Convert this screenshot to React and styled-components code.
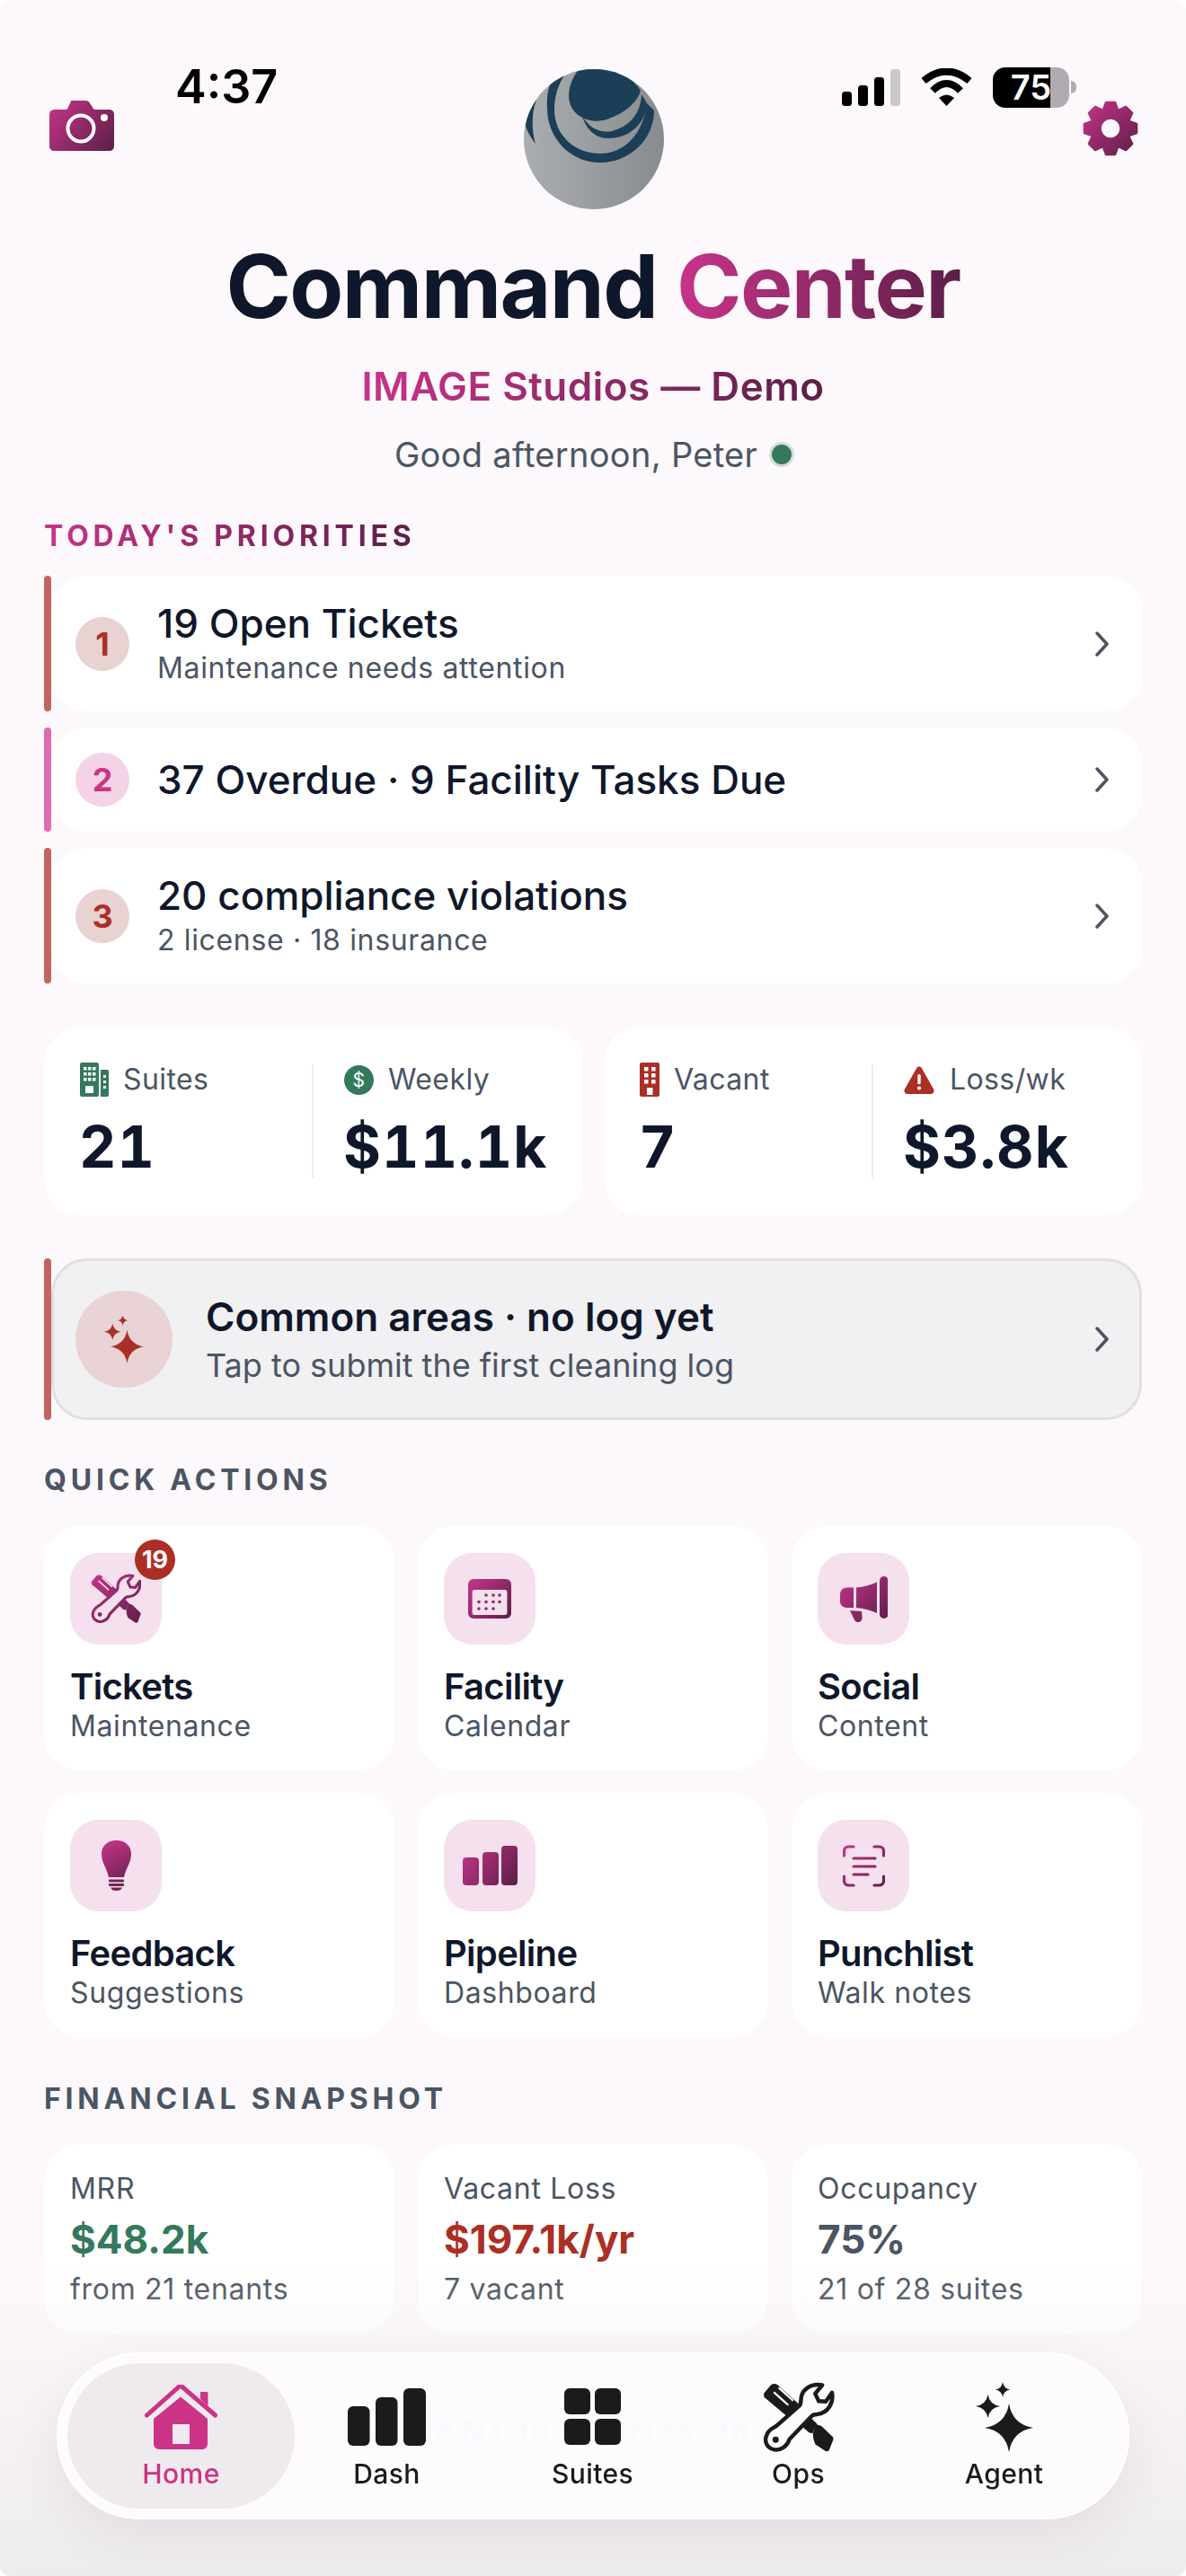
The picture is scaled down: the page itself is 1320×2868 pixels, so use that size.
import React from 'react';
import styled, { createGlobalStyle } from 'styled-components';

const PINK = '#c8348a';
const PLUM = '#5b1f47';
const INK = '#0f172a';
const GRAY = '#4b5563';
const GREEN = '#34795c';
const RED = '#ab2f25';
const NAV_INK = '#1c1a1c';
const TILE = '#f5e0ed';

const GlobalStyle = createGlobalStyle`
  * { box-sizing: border-box; }
  html, body { margin: 0; padding: 0; background: #fff; }
  body { font-family: Inter, "Noto Sans", sans-serif; color: ${INK}; }
`;

// #region Styles

const Page = styled.div`
  position: relative;
  width: 1320px;
  height: 2868px;
  overflow: hidden;
  background: #fcf8fb;
  border-radius: 12px;
`;

const StatusBar = styled.div`
  position: absolute;
  top: 68px;
  left: 195px;
  right: 122px;
  height: 58px;
  display: flex;
  align-items: center;
  justify-content: space-between;
  color: #000;
`;

const Time = styled.span`
  font-size: 52px;
  font-weight: 600;
  line-height: 58px;
`;

const StatusIcons = styled.div`
  display: flex;
  align-items: center;
  gap: 23px;
`;

const Battery = styled.div`
  display: flex;
  align-items: center;
  gap: 2px;
`;

const BatteryBody = styled.div`
  width: 85px;
  height: 45px;
  border-radius: 14px;
  background: linear-gradient(90deg, #000 75%, #b0abb0 75%);
  color: #fff;
  font-size: 38px;
  font-weight: 600;
  line-height: 45px;
  text-align: center;
`;

const BatteryNub = styled.div`
  width: 6px;
  height: 14px;
  border-radius: 0 7px 7px 0;
  background: #b0abb0;
`;

const TopRow = styled.header`
  display: flex;
  align-items: flex-start;
  padding: 77px 53px 0 55px;
`;

const TopIcon = styled.div`
  flex: 1;
  display: flex;
  justify-content: ${(p) => (p.$end ? 'flex-end' : 'flex-start')};
  margin-top: 35px;
`;

const Hero = styled.div`
  text-align: center;
  margin-top: 28px;
`;

const Title = styled.h1`
  margin: 0;
  font-size: 98px;
  font-weight: 700;
  line-height: 116px;
  letter-spacing: -1.6px;
  color: ${INK};
`;

const GradientText = styled.span`
  display: inline-block;
  background: linear-gradient(90deg, ${PINK}, ${PLUM});
  -webkit-background-clip: text;
  background-clip: text;
  color: transparent;
`;

const Subtitle = styled.div`
  margin-top: 27px;
  font-size: 44px;
  font-weight: 600;
  line-height: 52px;
  letter-spacing: 0.5px;
`;

const Greeting = styled.div`
  margin-top: 26px;
  display: flex;
  justify-content: center;
  align-items: center;
  gap: 16px;
  font-size: 38px;
  line-height: 48px;
  letter-spacing: 0.3px;
  color: ${GRAY};
`;

const OnlineDot = styled.span`
  width: 22px;
  height: 22px;
  border-radius: 50%;
  background: ${GREEN};
  box-shadow: 0 0 0 3px rgba(52, 121, 92, 0.2);
`;

const Main = styled.main`
  padding: 0 49px;
`;

const SectionLabel = styled.h2`
  margin: ${(p) => p.$top}px 0 ${(p) => p.$bottom}px;
  font-size: 32px;
  font-weight: 700;
  line-height: 40px;
  letter-spacing: 4.8px;
  color: ${GRAY};
`;

const PriorityList = styled.div`
  display: flex;
  flex-direction: column;
  gap: 18px;
`;

const AccentRow = styled.div`
  position: relative;
  display: flex;
  align-items: center;
  margin-left: 8px;
  border-radius: 40px;
  &::before {
    content: '';
    position: absolute;
    top: ${(p) => -(p.$inset || 0)}px;
    bottom: ${(p) => -(p.$inset || 0)}px;
    left: ${(p) => -8 - (p.$inset || 0)}px;
    width: 8px;
    border-radius: 4px;
    background: ${(p) => p.$accent};
  }
`;

const PriorityRow = styled(AccentRow)`
  min-height: 114px;
  padding: 28px 36px 28px 27px;
  background: #fff;
`;

const RankBadge = styled.div`
  flex: none;
  width: 60px;
  height: 60px;
  margin-right: 31px;
  border-radius: 50%;
  display: flex;
  align-items: center;
  justify-content: center;
  background: ${(p) => p.$bg};
  color: ${(p) => p.$color};
  font-size: 36px;
  font-weight: 700;
`;

const RowText = styled.div`
  flex: 1;
`;

const RowTitle = styled.div`
  font-size: 44px;
  font-weight: 500;
  line-height: 50px;
  color: ${INK};
`;

const RowSub = styled.div`
  margin-top: 5px;
  font-size: 32px;
  line-height: 40px;
  letter-spacing: 0.65px;
  color: ${GRAY};
`;

const StatsRow = styled.div`
  display: grid;
  grid-template-columns: 1fr 1fr;
  gap: 24px;
  margin-top: 48px;
`;

const StatCard = styled.div`
  display: flex;
  height: 210px;
  padding: 42px 0 41px 40px;
  background: #fff;
  border-radius: 40px;
`;

const StatCol = styled.div`
  height: 127px;
  &:first-child {
    width: 260px;
    flex: none;
    border-right: 2px solid #eeeeef;
  }
  &:last-child {
    padding-left: 34px;
  }
`;

const StatLabel = styled.div`
  display: flex;
  align-items: center;
  gap: ${(p) => p.$gap || 16}px;
  height: 34px;
  font-size: 32px;
  line-height: 34px;
  letter-spacing: 0.4px;
  color: ${GRAY};
`;

const StatValue = styled.div`
  margin-top: 23px;
  margin-left: -1px;
  font-size: 64px;
  font-weight: 700;
  line-height: 70px;
  letter-spacing: 1.2px;
  font-variant-numeric: tabular-nums;
  color: ${INK};
`;

const LogRow = styled(AccentRow)`
  height: 180px;
  margin-top: 48px;
  padding: 0 33px 0 24px;
  background: #f1f0f2;
  border: 3px solid #e1dfe2;
`;

const LogCircle = styled.div`
  flex: none;
  width: 108px;
  height: 108px;
  margin-right: 37px;
  border-radius: 50%;
  display: flex;
  align-items: center;
  justify-content: center;
  background: #e9d3d5;
`;

const LogTitle = styled.div`
  font-size: 44px;
  font-weight: 600;
  line-height: 52px;
  color: ${INK};
`;

const LogSub = styled.div`
  margin-top: 6px;
  font-size: 36px;
  line-height: 44px;
  color: ${GRAY};
`;

const ActionGrid = styled.div`
  display: grid;
  grid-template-columns: repeat(3, 390px);
  gap: 25px 26px;
`;

const ActionCard = styled.div`
  height: 272px;
  padding: 30px 29px;
  background: #fff;
  border-radius: 40px;
`;

const Tile = styled.div`
  position: relative;
  width: 102px;
  height: 102px;
  border-radius: 32px;
  display: flex;
  align-items: center;
  justify-content: center;
  background: ${TILE};
`;

const CountBadge = styled.span`
  position: absolute;
  top: -15px;
  right: -15px;
  width: 45px;
  height: 45px;
  border-radius: 50%;
  background: ${RED};
  color: #fff;
  font-size: 27px;
  font-weight: 700;
  line-height: 45px;
  text-align: center;
`;

const ActionTitle = styled.div`
  margin-top: 23px;
  font-size: 40px;
  font-weight: 600;
  line-height: 48px;
  letter-spacing: -0.7px;
  color: ${INK};
`;

const ActionSub = styled.div`
  font-size: 32px;
  line-height: 40px;
  letter-spacing: 0.6px;
  color: ${GRAY};
`;

const FinanceCard = styled.div`
  height: 212px;
  padding: 30px 29px;
  background: #fff;
  border-radius: 40px;
`;

const FinanceLabel = styled.div`
  font-size: 32px;
  line-height: 40px;
  letter-spacing: 0.7px;
  color: ${GRAY};
`;

const FinanceValue = styled.div`
  margin: 10px 0;
  font-size: 44px;
  font-weight: 700;
  line-height: 52px;
  color: ${(p) => p.$color};
`;

const BottomFade = styled.div`
  position: absolute;
  left: 0;
  right: 0;
  bottom: 0;
  height: 350px;
  pointer-events: none;
  background: linear-gradient(180deg, rgba(238, 235, 238, 0) 0%, rgba(238, 235, 238, 0.95) 100%);
`;

const GhostFooter = styled.div`
  margin-top: 85px;
  text-align: center;
  font-size: 34px;
  font-weight: 700;
  line-height: 44px;
  letter-spacing: 3px;
  color: ${INK};
`;

const BottomNav = styled.nav`
  position: absolute;
  left: 63px;
  right: 63px;
  bottom: 63px;
  height: 186px;
  padding: 10px;
  display: flex;
  border: 2px solid rgba(255, 255, 255, 0.9);
  border-radius: 93px;
  background: rgba(253, 251, 254, 0.975);
  backdrop-filter: blur(1.5px);
  box-shadow: 0 20px 60px rgba(40, 20, 40, 0.07);
`;

const NavItem = styled.div`
  flex: none;
  width: ${(p) => (p.$active ? 253 : 229)}px;
  height: 162px;
  margin-right: ${(p) => (p.$active ? -12 : 0)}px;
  padding-top: 19px;
  border-radius: 81px;
  display: flex;
  flex-direction: column;
  align-items: center;
  gap: 6px;
  background: ${(p) => (p.$active ? '#efeaed' : 'transparent')};
  color: ${(p) => (p.$active ? '#cc3286' : NAV_INK)};
`;

const NavIcon = styled.div`
  height: 82px;
  display: flex;
  align-items: center;
`;

const NavLabel = styled.span`
  font-size: 30px;
  font-weight: 500;
  line-height: 32px;
  letter-spacing: 0.4px;
`;

// #endregion

// #region Icons

const Brand = ({ id, w, h }) => (
  <defs>
    <linearGradient id={id} gradientUnits="userSpaceOnUse" x1="0" y1="0" x2={w} y2={h}>
      <stop offset="0" stopColor={PINK} />
      <stop offset="1" stopColor={PLUM} />
    </linearGradient>
  </defs>
);

const CameraIcon = () => (
  <svg width="72" height="56" viewBox="0 0 72 56">
    <Brand id="cam" w={72} h={56} />
    <path
      fill="url(#cam)"
      fillRule="evenodd"
      d="M24 0h16c3 0 4 1 5 3l4 6 1 1h16c4 0 6 2 6 6v34c0 4-2 6-6 6H6c-4 0-6-2-6-6V16c0-4 2-6 6-6h13l1-1 3-6c1-2 1-3 1-3z"
    />
    <circle cx="35" cy="31" r="14.5" fill="none" stroke="#fff" strokeWidth="4" />
    <circle cx="61" cy="19" r="4" fill="#fff" />
  </svg>
);

function gearPath(c, tip, root, hole) {
  let d = '';
  for (let i = 0; i < 8; i++) {
    const a = (i * Math.PI) / 4 - Math.PI / 2;
    const pts = [
      [root, a - 0.36],
      [tip, a - 0.17],
      [tip, a + 0.17],
      [root, a + 0.36],
    ];
    pts.forEach(([r, t], j) => {
      const x = (c + r * Math.cos(t)).toFixed(2);
      const y = (c + r * Math.sin(t)).toFixed(2);
      d += `${i === 0 && j === 0 ? 'M' : 'L'}${x} ${y} `;
    });
  }
  d += `Z M${c - hole} ${c} a${hole} ${hole} 0 1 0 ${hole * 2} 0 a${hole} ${hole} 0 1 0 ${-hole * 2} 0 Z`;
  return d;
}

const GearIcon = () => (
  <svg width="62" height="62" viewBox="0 0 62 62">
    <Brand id="gear" w={62} h={62} />
    <path
      d={gearPath(31, 29.5, 22.5, 11.5)}
      fill="url(#gear)"
      fillRule="evenodd"
      stroke="url(#gear)"
      strokeWidth="2.5"
      strokeLinejoin="round"
    />
  </svg>
);

const SignalIcon = () => (
  <svg width="65" height="41" viewBox="0 0 65 41">
    <rect x="0" y="25" width="11" height="16" rx="3.5" fill="#000" />
    <rect x="18" y="18" width="11" height="23" rx="3.5" fill="#000" />
    <rect x="36" y="9" width="11" height="32" rx="3.5" fill="#000" />
    <rect x="54" y="0" width="11" height="41" rx="3.5" fill="#cbc8cb" />
  </svg>
);

const WifiIcon = () => (
  <svg width="57" height="42" viewBox="0 0 57 42">
    <path d="M3 14Q28.5 -7 54 14" fill="none" stroke="#000" strokeWidth="8" />
    <path d="M13 25Q28.5 9 44 25" fill="none" stroke="#000" strokeWidth="8" />
    <path d="M20 33Q28.5 26 37 33L28.5 42Z" fill="#000" />
  </svg>
);

const Chevron = () => (
  <svg width="17" height="28" viewBox="0 0 17 28" style={{ flex: 'none' }}>
    <path d="M3 2l11 12L3 26" fill="none" stroke={GRAY} strokeWidth="3.5" strokeLinecap="round" strokeLinejoin="round" />
  </svg>
);

const SuitesBuilding = () => (
  <svg width="32" height="38" viewBox="0 0 32 38" style={{ flex: 'none' }}>
    <rect x="0" y="0" width="21" height="38" rx="2" fill={GREEN} />
    <path d="M23 8h7a2 2 0 0 1 2 2v26a2 2 0 0 1-2 2h-7z" fill={GREEN} />
    {[4, 9, 14].flatMap((x) =>
      [5, 11, 17].map((y) => <rect key={`${x}-${y}`} x={x} y={y} width="3.5" height="3.5" fill="#fff" />)
    )}
    <rect x="6" y="26" width="9" height="8" fill="#fff" />
    {[14, 20, 26].map((y) => (
      <rect key={y} x="26" y={y} width="3" height="3" fill="#fff" />
    ))}
  </svg>
);

const VacantBuilding = () => (
  <svg width="22" height="38" viewBox="0 0 22 38" style={{ flex: 'none' }}>
    <rect x="0" y="0" width="22" height="38" rx="2" fill={RED} />
    {[5, 13].flatMap((x) =>
      [5, 12, 19].map((y) => <rect key={`${x}-${y}`} x={x} y={y} width="4.5" height="4.5" fill="#fff" />)
    )}
    <rect x="8" y="28" width="6.5" height="8" fill="#fff" />
  </svg>
);

const DollarIcon = () => (
  <svg width="33" height="33" viewBox="0 0 33 33" style={{ flex: 'none' }}>
    <circle cx="16.5" cy="16.5" r="16.5" fill={GREEN} />
    <text x="16.5" y="24" textAnchor="middle" fontSize="21" fontFamily="Inter, sans-serif" fill="#fff">$</text>
  </svg>
);

const AlertIcon = () => (
  <svg width="34" height="31" viewBox="0 0 34 31" style={{ flex: 'none' }}>
    <path d="M14 2.5c1.4-2.6 4.6-2.6 6 0l13 23c1.4 2.6-.2 5.500-3 5.500H4c-2.800 0-4.400-2.900-3-5.500z" fill={RED} />
    <rect x="15.300" y="9" width="3.400" height="11" rx="1.500" fill="#fff" />
    <circle cx="17" cy="24.500" r="2.100" fill="#fff" />
  </svg>
);

const star = (cx, cy, rx, ry) => {
  const kx = rx * 0.14;
  const ky = ry * 0.14;
  return `M${cx} ${cy - ry}Q${cx + kx} ${cy - ky} ${cx + rx} ${cy}Q${cx + kx} ${cy + ky} ${cx} ${cy + ry}Q${cx - kx} ${cy + ky} ${cx - rx} ${cy}Q${cx - kx} ${cy - ky} ${cx} ${cy - ry}Z`;
};

const SparkleIcon = ({ width, height, color }) => (
  <svg width={width} height={height} viewBox="0 0 64 78" fill={color}>
    <path d={star(37, 51, 27, 27)} />
    <path d={star(13.500, 27, 13.500, 13)} />
    <path d={star(30, 8.500, 8, 8.500)} />
  </svg>
);

const ToolsIcon = ({ width, height, fill, bg, id }) => (
  <svg width={width} height={height} viewBox="0 0 80 80">
    <Brand id={id} w={80} h={80} />
    <g fill={fill}>
      <path d="M1.500 12.500L9 3.500Q13 .5 17 3.500L43 27 30 41 2 17.500Q.5 15 1.500 12.500Z" />
      <path d="M31 38.500L41 27.500 61 47 56 58 52 57Z" />
      <path d="M60 47.500l6 2 13 12.500q1 2 .2 3.500l-4.500 11.500q-2 2-4 1L59 70l-2-6-.5-6z" />
    </g>
    <path d="M13 12l15 13.500M18.500 7l15 13.500" fill="none" stroke={bg} strokeWidth="2.200" strokeLinecap="round" />
    <path
      d="M67 3.500L59 13l4 8.500 8 .5 7-10C80 23 74 35 61 36.500c-3 0-5 .5-6.500 2.500L30 64.500C28 72 20 78 12 76 4 74 1 66 5 58.500 7 53.500 12 52 16 49L41 27c2-2 2-4 2-7C43 9 54 1 67 3.500Z"
      fill={bg}
      stroke={fill}
      strokeWidth="4.500"
      strokeLinejoin="round"
    />
    <circle cx="14.500" cy="65" r="3.500" fill={fill} />
  </svg>
);

const CalendarIcon = () => (
  <svg width="48" height="44" viewBox="0 0 48 44">
    <Brand id="cal" w={48} h={44} />
    <rect width="48" height="44" rx="6" fill="url(#cal)" />
    <rect x="4.600" y="12" width="38.800" height="28" rx="2.500" fill={TILE} />
    {[
      [20, 18], [28, 18], [35, 18],
      [12, 25.500], [20, 25.500], [28, 25.500], [35, 25.500],
      [12, 33], [20, 33], [28, 33],
    ].map(([cx, cy]) => (
      <circle key={`${cx}-${cy}`} cx={cx} cy={cy} r="1.800" fill="#8c2a68" />
    ))}
  </svg>
);

const MegaphoneIcon = () => (
  <svg width="53" height="51" viewBox="0 0 53 51">
    <Brand id="mega" w={53} h={51} />
    <g fill="url(#mega)">
      <path d="M15 12.500V35H8c-5 0-8-3-8-7v-8c0-4 3-7.500 8-7.500z" />
      <path d="M18 12.500c8-.5 16-3 23-6V41c-7-3-15-5.500-23-6z" />
      <rect x="44" y="0" width="9.500" height="47" rx="4.700" />
      <path d="M11 38l13 1 .5 7c0 3-2 5-4.500 5-2 0-3.500-1.200-4.300-3z" />
    </g>
  </svg>
);

const BulbIcon = () => (
  <svg width="33" height="56" viewBox="0 0 33 56">
    <Brand id="bulb" w={33} h={56} />
    <g fill="url(#bulb)">
      <path d="M16.500 0C26 0 33 6 33 15c0 10-6 16-8 26H8C6 31 0 25 0 15 0 6 7 0 16.500 0Z" />
      <rect x="8" y="43.500" width="17" height="3" rx="1" />
      <rect x="8" y="48" width="17" height="3" rx="1" />
      <path d="M10 52.500h13c-1 2.500-3 3.500-6.500 3.500s-5.500-1-6.500-3.500Z" />
    </g>
  </svg>
);

const PipelineIcon = () => (
  <svg width="61" height="44" viewBox="0 0 61 44">
    <Brand id="pipe" w={61} h={44} />
    <g fill="url(#pipe)">
      <rect x="0" y="13" width="18" height="31" rx="4" />
      <rect x="22" y="7" width="18" height="37" rx="4" />
      <rect x="43" y="0" width="18" height="44" rx="4" />
    </g>
  </svg>
);

const ScanIcon = () => (
  <svg width="47" height="47" viewBox="0 0 47 47">
    <Brand id="scan" w={47} h={47} />
    <path
      d="M1.500 12V7a5 5 0 0 1 5-5H12M35 2h5.500a5 5 0 0 1 5 5v5M45.500 35v5a5 5 0 0 1-5 5H35M12 45H6.500a5 5 0 0 1-5-5v-5M12 15h24M12 24h24M12 33h16"
      fill="none"
      stroke="url(#scan)"
      strokeWidth="3.200"
      strokeLinecap="round"
    />
  </svg>
);

const HomeIcon = () => (
  <svg width="81" height="72" viewBox="0 0 81 72">
    <g fill="currentColor">
      <path d="M62 8h7a1.500 1.500 0 0 1 1.500 1.500V24L62 16Z" />
      <path fillRule="evenodd" d="M40 13.500L70 38v28a6 6 0 0 1-6 6H16a6 6 0 0 1-6-6V38ZM31 44v22h19V44Z" />
    </g>
    <path d="M2.500 34L38 2.500Q40 1 42 2.500L78.500 34" fill="none" stroke="currentColor" strokeWidth="5" strokeLinecap="round" />
  </svg>
);

const DashIcon = () => (
  <svg width="87" height="64" viewBox="0 0 87 64" fill="currentColor">
    <rect x="0" y="20" width="24.500" height="44" rx="6" />
    <rect x="31" y="10" width="24.500" height="54" rx="6" />
    <rect x="62" y="0" width="25" height="64" rx="6" />
  </svg>
);

const SuitesIcon = () => (
  <svg width="63" height="64" viewBox="0 0 63 64" fill="currentColor">
    <rect x="0" y="0" width="29" height="29" rx="6" />
    <rect x="34" y="0" width="29" height="29" rx="6" />
    <rect x="0" y="34" width="29" height="29" rx="6" />
    <rect x="34" y="34" width="29" height="29" rx="6" />
  </svg>
);

// The logo is a grey disc with navy swirl bands, clipped to the circle.
const Logo = () => (
  <svg width="156" height="156" viewBox="0 0 156 156" style={{ flex: 'none' }}>
    <defs>
      <linearGradient id="logoBg" x1="0" y1="0" x2="1" y2="0">
        <stop offset="0" stopColor="#aaaeb1" />
        <stop offset="1" stopColor="#888c8e" />
      </linearGradient>
      <clipPath id="logoClip">
        <circle cx="78" cy="78" r="78" />
      </clipPath>
    </defs>
    <circle cx="78" cy="78" r="78" fill="url(#logoBg)" />
    <g clipPath="url(#logoClip)" fill="#1c3e57">
      <path d="M61 0C50 15 48 30 52 40c6 15 26 22 43 15 20-7 32-20 35-31C120 8 100-3 78-2Z" />
      <path d="M64 49c8 19 24 22 34 20 22-6 32-21 33-41l6 10c-1 22-19 39-43 39-16 0-26-12-30-28Z" />
      <path d="M32 12l13-5c-9 13-13 33-10 48 5 25 27 39 50 39 27 0 48-22 52-56l8 8c0 32-27 58-60 58-30 0-53-22-58-49-2-17-2-33 5-43Z" />
      <path d="M14 34C8 42 3 52 2 63c2 7 7 15 11 20-4-13-5-33 1-49Z" />
    </g>
  </svg>
);

// #endregion

const priorities = [
  { n: 1, title: '19 Open Tickets', sub: 'Maintenance needs attention', tone: 'red' },
  { n: 2, title: '37 Overdue · 9 Facility Tasks Due', tone: 'pink' },
  { n: 3, title: '20 compliance violations', sub: '2 license · 18 insurance', tone: 'red' },
];

const tones = {
  red: { bar: '#c0655f', bg: '#e9d3d2', fg: RED },
  pink: { bar: '#e06cb0', bg: '#f5d3e7', fg: '#cc3286' },
};

const actions = [
  { title: 'Tickets', sub: 'Maintenance', icon: <ToolsIcon id="tileTools" width={56} height={56} fill="url(#tileTools)" bg={TILE} />, badge: 19 },
  { title: 'Facility', sub: 'Calendar', icon: <CalendarIcon /> },
  { title: 'Social', sub: 'Content', icon: <MegaphoneIcon /> },
  { title: 'Feedback', sub: 'Suggestions', icon: <BulbIcon /> },
  { title: 'Pipeline', sub: 'Dashboard', icon: <PipelineIcon /> },
  { title: 'Punchlist', sub: 'Walk notes', icon: <ScanIcon /> },
];

const finance = [
  { label: 'MRR', value: '$48.2k', sub: 'from 21 tenants', color: GREEN },
  { label: 'Vacant Loss', value: '$197.1k/yr', sub: '7 vacant', color: RED },
  { label: 'Occupancy', value: '75%', sub: '21 of 28 suites', color: GRAY },
];

const navItems = [
  { label: 'Home', icon: <HomeIcon />, active: true },
  { label: 'Dash', icon: <DashIcon /> },
  { label: 'Suites', icon: <SuitesIcon /> },
  { label: 'Ops', icon: <ToolsIcon id="navTools" width={81} height={79} fill={NAV_INK} bg="#fdfbfe" /> },
  { label: 'Agent', icon: <SparkleIcon width={64} height={78} color={NAV_INK} /> },
];

export default function App() {
  return (
    <Page>
      <GlobalStyle />

      <TopRow>
        <TopIcon><CameraIcon /></TopIcon>
        <Logo />
        <TopIcon $end><GearIcon /></TopIcon>
      </TopRow>

      <StatusBar>
        <Time>4:37</Time>
        <StatusIcons>
          <SignalIcon />
          <WifiIcon />
          <Battery>
            <BatteryBody>75</BatteryBody>
            <BatteryNub />
          </Battery>
        </StatusIcons>
      </StatusBar>

      <Hero>
        <Title>Command <GradientText>Center</GradientText></Title>
        <Subtitle><GradientText>IMAGE Studios — Demo</GradientText></Subtitle>
        <Greeting>Good afternoon, Peter <OnlineDot /></Greeting>
      </Hero>

      <Main>
        <SectionLabel $top={47} $bottom={24}><GradientText>TODAY'S PRIORITIES</GradientText></SectionLabel>
        <PriorityList>
          {priorities.map((p) => (
            <PriorityRow key={p.n} $accent={tones[p.tone].bar}>
              <RankBadge $bg={tones[p.tone].bg} $color={tones[p.tone].fg}>{p.n}</RankBadge>
              <RowText>
                <RowTitle>{p.title}</RowTitle>
                {p.sub && <RowSub>{p.sub}</RowSub>}
              </RowText>
              <Chevron />
            </PriorityRow>
          ))}
        </PriorityList>

        <StatsRow>
          <StatCard>
            <StatCol>
              <StatLabel><SuitesBuilding />Suites</StatLabel>
              <StatValue>21</StatValue>
            </StatCol>
            <StatCol>
              <StatLabel><DollarIcon />Weekly</StatLabel>
              <StatValue>$11.1k</StatValue>
            </StatCol>
          </StatCard>
          <StatCard>
            <StatCol>
              <StatLabel><VacantBuilding />Vacant</StatLabel>
              <StatValue>7</StatValue>
            </StatCol>
            <StatCol>
              <StatLabel $gap={17}><AlertIcon />Loss/wk</StatLabel>
              <StatValue>$3.8k</StatValue>
            </StatCol>
          </StatCard>
        </StatsRow>

        <LogRow $accent="#c0655f" $inset={3}>
          <LogCircle><SparkleIcon width={44} height={54} color={RED} /></LogCircle>
          <RowText>
            <LogTitle>Common areas · no log yet</LogTitle>
            <LogSub>Tap to submit the first cleaning log</LogSub>
          </RowText>
          <Chevron />
        </LogRow>

        <SectionLabel $top={47} $bottom={31}>QUICK ACTIONS</SectionLabel>
        <ActionGrid>
          {actions.map((a) => (
            <ActionCard key={a.title}>
              <Tile>
                {a.icon}
                {a.badge && <CountBadge>{a.badge}</CountBadge>}
              </Tile>
              <ActionTitle>{a.title}</ActionTitle>
              <ActionSub>{a.sub}</ActionSub>
            </ActionCard>
          ))}
        </ActionGrid>

        <SectionLabel $top={49} $bottom={30}>FINANCIAL SNAPSHOT</SectionLabel>
        <ActionGrid>
          {finance.map((f) => (
            <FinanceCard key={f.label}>
              <FinanceLabel>{f.label}</FinanceLabel>
              <FinanceValue $color={f.color}>{f.value}</FinanceValue>
              <FinanceLabel>{f.sub}</FinanceLabel>
            </FinanceCard>
          ))}
        </ActionGrid>
        <GhostFooter>PKNT Industries, Inc</GhostFooter>
      </Main>

      <BottomFade />

      <BottomNav>
        {navItems.map((item) => (
          <NavItem key={item.label} $active={item.active}>
            <NavIcon>{item.icon}</NavIcon>
            <NavLabel>{item.label}</NavLabel>
          </NavItem>
        ))}
      </BottomNav>
    </Page>
  );
}
